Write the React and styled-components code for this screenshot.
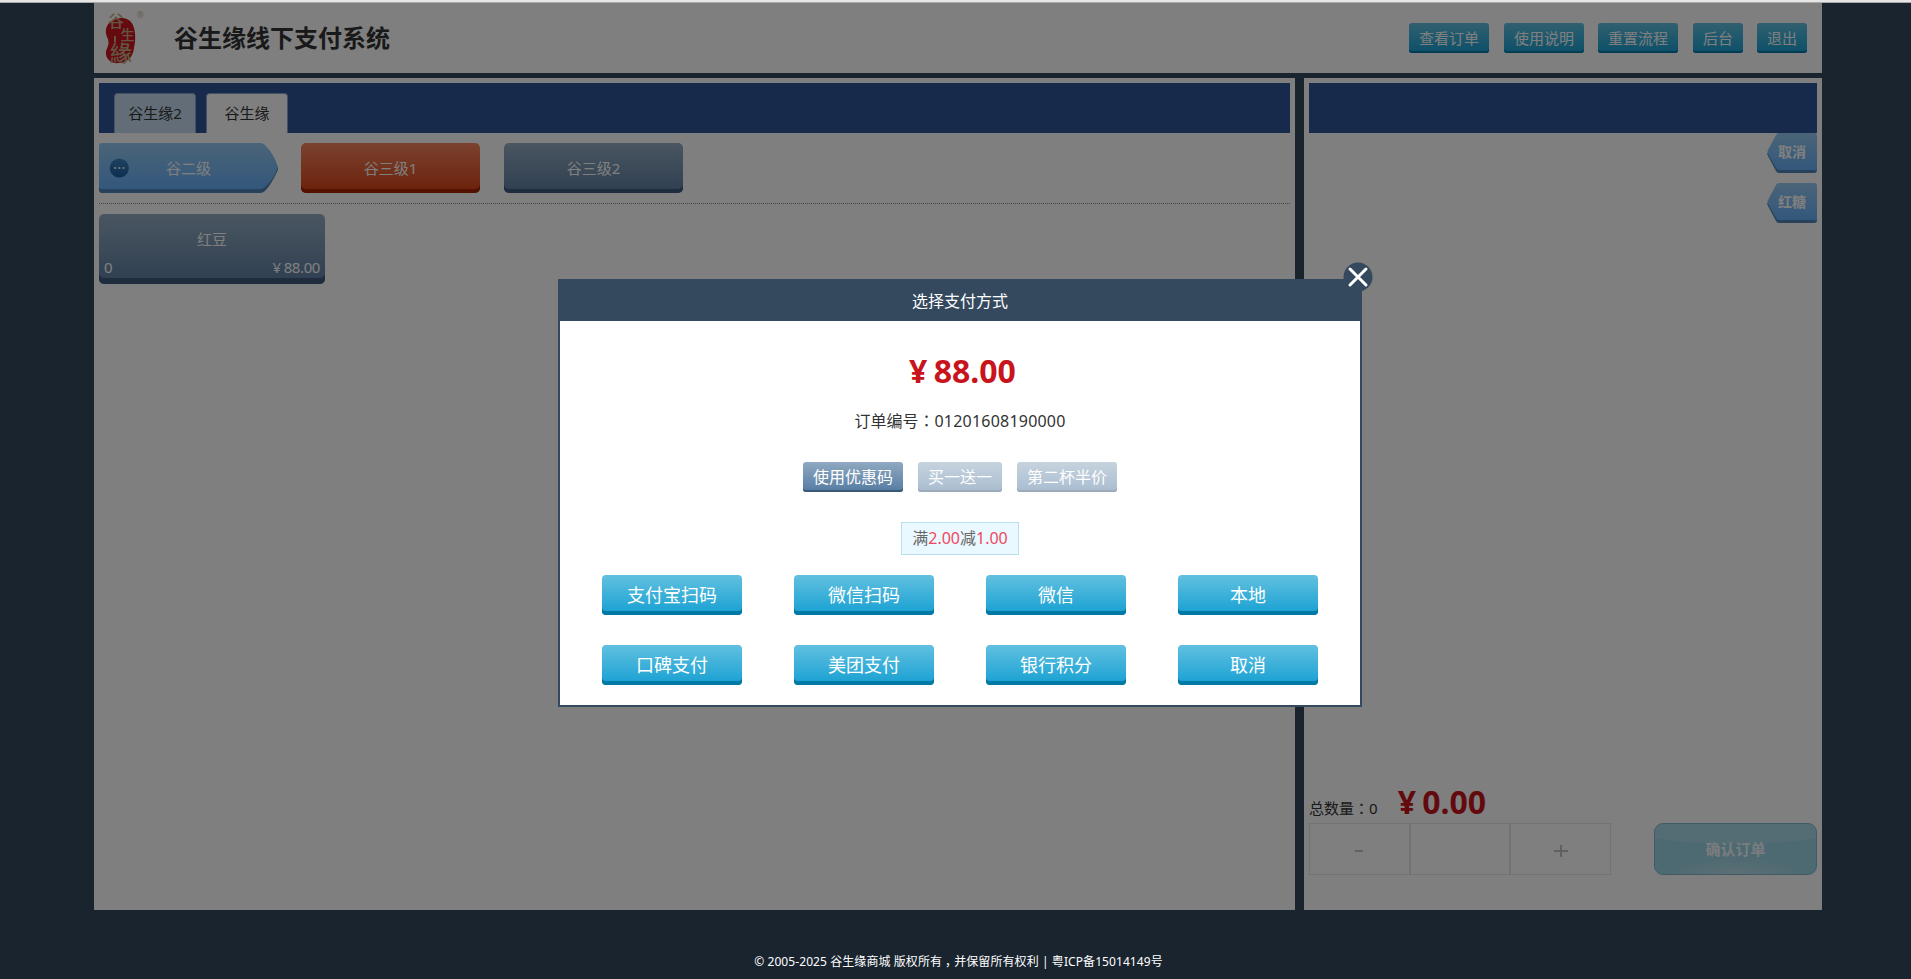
import React from "react";
import styled, { createGlobalStyle, css } from "styled-components";

const GlobalStyle = createGlobalStyle`
  *, *::before, *::after { box-sizing: border-box; }
  html, body { margin: 0; height: 100%; overflow: hidden; background: #34495e; }
  body {
    font-family: "Noto Sans", "Noto Sans CJK SC", sans-serif;
    font-size: 15px;
    color: #333;
  }
  button { font-family: inherit; margin: 0; padding: 0; border: 0; cursor: pointer; }
`;

const Page = styled.div`
  position: relative;
  display: flex;
  flex-direction: column;
  height: 979px;
  background: #34495e;
`;

const TopStrip = styled.div`
  flex: none;
  height: 3px;
  background: #e6e6e6;
  border-bottom: 1px solid #a9a9a9;
`;

const Shell = styled.div`
  flex: none;
  width: 1728px;
  margin-left: 94px;
  display: flex;
  flex-direction: column;
  gap: 5px;
`;

const Header = styled.header`
  height: 70px;
  display: flex;
  align-items: center;
  background: #fff;
  padding: 0 15px 0 8px;
`;

const Logo = styled.svg`
  flex: none;
  width: 52px;
  height: 60px;
  overflow: visible;
`;

const Brand = styled.h1`
  flex: 1;
  margin: 0 0 0 20px;
  font-size: 24px;
  line-height: 34px;
  font-weight: 700;
  color: #333;
`;

const HeaderNav = styled.nav`
  display: flex;
`;

const skins = {
  cyan: css`
    background: linear-gradient(#62c0e0, #16a0d2);
    --edge: #0079a6;
  `,
  steel: css`
    background: linear-gradient(#8fa9c0, #557ba2);
    --edge: #3b5877;
  `,
  slate: css`
    background: linear-gradient(#94acc2, #5d7da2);
    --edge: #3c587a;
  `,
  red: css`
    background: linear-gradient(#f48560, #d84214);
    --edge: #a82200;
  `,
};

const Button = styled.button`
  ${(p) => skins[p.$skin]}
  flex: none;
  display: flex;
  justify-content: center;
  width: ${(p) => p.$w}px;
  height: ${(p) => p.$h}px;
  line-height: ${(p) => p.$h}px;
  border-radius: ${(p) => p.$r || 3}px;
  box-shadow: inset 0 -${(p) => p.$edge || 2}px 0 var(--edge);
  color: #fff;
  font-size: ${(p) => p.$size || 15}px;
  margin-left: ${(p) => p.$gap || 0}px;
  opacity: ${(p) => (p.$faded ? 0.5 : 1)};
  white-space: nowrap;
`;

const Workspace = styled.main`
  display: flex;
  justify-content: space-between;
  height: 832px;
`;

const Panel = styled.section`
  width: ${(p) => p.$w}px;
  padding: 5px;
  background: #fff;
  display: flex;
  flex-direction: column;
`;

const TabBar = styled.div`
  flex: none;
  height: 50px;
  padding: 10px 15px 0;
  display: flex;
  gap: 10px;
  background: #305598;
`;

const Tab = styled.div`
  width: 82px;
  height: 40px;
  line-height: 39px;
  text-align: center;
  border: 1px solid #8ba5c6;
  border-bottom: 0;
  border-radius: 4px 4px 0 0;
  background: ${(p) => (p.$active ? "#fff" : "#c5daf0")};
`;

const CategoryRow = styled.div`
  display: flex;
  gap: 24px;
  padding: 10px 0;
  border-bottom: 1px dotted #888;
`;

const Arrow = styled.div`
  display: grid;
  width: 179px;
  height: 50px;
  margin-right: -1px;
  svg, span { grid-area: 1 / 1; }
  span { color: #fff; text-align: center; line-height: 50px; }
`;

const Product = styled.div`
  ${skins.slate}
  width: 226px;
  height: 70px;
  margin-top: 10px;
  padding: 10px 5px 0;
  border-radius: 5px;
  box-shadow: inset 0 -6px 0 var(--edge);
  color: #fff;
`;

const ProductName = styled.div`
  height: 30px;
  line-height: 30px;
  text-align: center;
`;

const ProductMeta = styled.div`
  display: flex;
  justify-content: space-between;
  line-height: 27px;
  height: 24px;
  letter-spacing: -0.4px;
  word-spacing: -0.6px;
`;

const TagList = styled.div`
  flex: 1;
  display: flex;
  flex-direction: column;
  align-items: flex-end;
  gap: 10px;
`;

const TagBox = styled.div`
  display: grid;
  width: 50px;
  height: 40px;
  svg, span { grid-area: 1 / 1; }
  span {
    padding-left: 11px;
    color: #fff;
    font-size: 14px;
    font-weight: 700;
    line-height: 38px;
  }
`;

const Totals = styled.div`
  display: flex;
  align-items: baseline;
  gap: 20px;
  height: 43px;
  line-height: 44px;
  white-space: nowrap;
`;

/* Full-width colon drawn in the middle of its cell */
const Colon = styled.span`
  font-family: "Noto Sans CJK TC", sans-serif;
  line-height: 1;
`;

const Comma = styled.span`
  padding-left: 3px;
  margin-right: -3px;
`;

const Price = styled.strong`
  font-size: 32px;
  font-weight: 700;
  color: #c7141d;
  word-spacing: -2px;
`;

const OrderRow = styled.div`
  display: flex;
  justify-content: space-between;
  height: 52px;
  margin-bottom: 30px;
`;

const Stepper = styled.div`
  display: flex;
  width: 302px;
`;

const StepCell = styled.div`
  flex: 1;
  border: 1px solid #e6e6e6;
  display: flex;
  align-items: center;
  justify-content: center;
  svg { margin-top: 4px; }
`;

const Confirm = styled.button`
  width: 163px;
  height: 52px;
  padding-bottom: 2px;
  border-radius: 9px;
  border: 1px solid #82b9cf;
  background:
    radial-gradient(ellipse 105px 16px at 50% 4px, rgba(255,255,255,.14) 98%, transparent 100%),
    radial-gradient(ellipse 70px 17px at 50% 100%, #bbdfea, rgba(187,223,234,0)),
    #9ad2e4;
  color: #f5fafc;
  font-size: 15px;
  font-weight: 700;
`;

const Overlay = styled.div`
  position: absolute;
  inset: 3px 0 0 0;
  background: rgba(0, 0, 0, 0.5);
  display: flex;
  justify-content: center;
  align-items: flex-start;
  padding: 276px 0 0 9px;
`;

const Dialog = styled.div`
  position: relative;
  width: 804px;
  height: 428px;
  border: 2px solid #34495e;
  background: #fff;
  display: flex;
  flex-direction: column;
  align-items: center;
`;

const DialogTitle = styled.div`
  width: 100%;
  height: 40px;
  line-height: 40px;
  text-align: center;
  font-size: 16px;
  color: #fff;
  background: #34495e;
`;

const CloseButton = styled.button`
  position: absolute;
  top: -19px;
  right: -13px;
  width: 30px;
  height: 30px;
  background: none;
  svg { display: block; }
`;

const Amount = styled(Price)`
  margin-top: 28px;
  padding-left: 5px;
  line-height: 43px;
`;

const OrderNo = styled.div`
  height: 24px;
  margin-top: 17px;
  font-size: 16px;
  line-height: 24px;
`;

const Digits = styled.span`
  letter-spacing: 0.22px;
`;

const CouponRow = styled.div`
  display: flex;
  gap: 15px;
  margin-top: 29px;
`;

const Promo = styled.div`
  width: 118px;
  height: 33px;
  margin-top: 30px;
  line-height: 31px;
  text-align: center;
  font-size: 16px;
  color: #666;
  border: 1px solid #b8e1ee;
  background: #eaf8ff;
  em { font-style: normal; color: #f04860; }
`;

const PayGrid = styled.div`
  width: 768px;
  display: grid;
  grid-template-columns: repeat(4, 192px);
  justify-items: center;
  row-gap: 30px;
  margin-top: 20px;
`;

const Footer = styled.footer`
  position: relative;
  margin-top: 42px;
  padding-left: 6px;
  text-align: center;
  font-size: 12px;
  line-height: 20px;
  letter-spacing: 0.08px;
  color: #fff;
`;

const SealLogo = () => (
  <Logo viewBox="0 0 52 60">
    <path
      d="M12 12C5 14 2 22 5 29C8 35 6 38 4 43C3 51 9 56 17 55C27 54 31 48 32 40C34 32 34 20 29 14C25 9 17 9 12 12Z"
      fill="#cb141e"
    />
    <path d="M12 28h2v6h-2z" fill="#c6aa84" />
    <text fill="#c6aa84" fontWeight="500" fontFamily='"Noto Sans CJK TC",sans-serif'>
      <tspan x="6" y="19" fontSize="16">谷</tspan>
      <tspan x="18.5" y="32" fontSize="14">生</tspan>
      <tspan x="8" y="53" fontSize="22">緣</tspan>
    </text>
    <text x="34.5" y="9.5" fontSize="9" fill="#cdbba4">®</text>
  </Logo>
);

const CategoryArrow = ({ children }) => (
  <Arrow>
    <svg width="179" height="50" viewBox="0 0 179 50">
      <defs>
        <linearGradient id="sky" x1="0" y1="0" x2="0" y2="1">
          <stop offset="0" stopColor="#96c8f0" />
          <stop offset="1" stopColor="#66b0f8" />
        </linearGradient>
        <linearGradient id="dot" x1="0" y1="0" x2="0" y2="1">
          <stop offset="0" stopColor="#3e86c4" />
          <stop offset="1" stopColor="#1c5c9c" />
        </linearGradient>
      </defs>
      <path d="M0 40H168L179 24V27Q172 42 166 48Q164 50 161 50H3Q0 50 0 47Z" fill="#4e84b4" />
      <path d="M3 0H161Q164 0 166 2Q175 11 179 24Q175 36 166 44Q164 46 161 46H3Q0 46 0 43V3Q0 0 3 0Z" fill="url(#sky)" />
      <circle cx="20.3" cy="25" r="9.6" fill="url(#dot)" />
      <path d="M15.2 24h2v2h-2zM19.3 24h2v2h-2zM23.4 24h2v2h-2z" fill="#cfe2f2" />
    </svg>
    <span>{children}</span>
  </Arrow>
);

const Tag = ({ children }) => (
  <TagBox>
    <svg width="50" height="40" viewBox="0 0 50 40">
      <path d="M0 20H50V37Q50 40 47 40H12Q10 40 9 38L1 23Z" fill="#4e84b4" />
      <path d="M12 0H47Q50 0 50 3V37H12Q10 37 9 35L1 21Q0 19 1 17L9 2Q10 0 12 0Z" fill="url(#sky)" />
    </svg>
    <span>{children}</span>
  </TagBox>
);

const headerActions = [
  ["查看订单", 80, 0],
  ["使用说明", 80, 15],
  ["重置流程", 80, 14],
  ["后台", 50, 15],
  ["退出", 50, 14],
];

const payMethods = ["支付宝扫码", "微信扫码", "微信", "本地", "口碑支付", "美团支付", "银行积分", "取消"];

export default function App() {
  return (
    <Page>
      <GlobalStyle />
      <TopStrip />
      <Shell>
        <Header>
          <SealLogo />
          <Brand>谷生缘线下支付系统</Brand>
          <HeaderNav>
            {headerActions.map(([label, w, gap]) => (
              <Button key={label} $skin="cyan" $w={w} $h={30} $gap={gap}>{label}</Button>
            ))}
          </HeaderNav>
        </Header>
        <Workspace>
          <Panel $w={1201}>
            <TabBar>
              <Tab>谷生缘2</Tab>
              <Tab $active>谷生缘</Tab>
            </TabBar>
            <CategoryRow>
              <CategoryArrow>谷二级</CategoryArrow>
              <Button $skin="red" $w={179} $h={50} $r={5} $edge={4}>谷三级1</Button>
              <Button $skin="slate" $w={179} $h={50} $r={5} $edge={4}>谷三级2</Button>
            </CategoryRow>
            <Product>
              <ProductName>红豆</ProductName>
              <ProductMeta>
                <span>0</span>
                <span>¥ 88.00</span>
              </ProductMeta>
            </Product>
          </Panel>
          <Panel $w={518}>
            <TabBar />
            <TagList>
              <Tag>取消</Tag>
              <Tag>红糖</Tag>
            </TagList>
            <Totals>
              <span>总数量<Colon>：</Colon>0</span>
              <Price>¥ 0.00</Price>
            </Totals>
            <OrderRow>
              <Stepper>
                <StepCell>
                  <svg width="14" height="14"><path d="M3 7h8" stroke="#c0c0c0" strokeWidth="2" /></svg>
                </StepCell>
                <StepCell />
                <StepCell>
                  <svg width="14" height="14"><path d="M0 7h14M7 1v12" stroke="#c0c0c0" strokeWidth="2" /></svg>
                </StepCell>
              </Stepper>
              <Confirm>确认订单</Confirm>
            </OrderRow>
          </Panel>
        </Workspace>
      </Shell>
      <Overlay>
        <Dialog>
          <DialogTitle>选择支付方式</DialogTitle>
          <CloseButton aria-label="关闭">
            <svg width="30" height="30" viewBox="0 0 30 30">
              <circle cx="15" cy="15" r="14.5" fill="#34495e" />
              <path d="M7 7L23 23M23 7L7 23" stroke="#fff" strokeWidth="3" strokeLinecap="round" />
            </svg>
          </CloseButton>
          <Amount>¥ 88.00</Amount>
          <OrderNo>订单编号<Colon>：</Colon><Digits>01201608190000</Digits></OrderNo>
          <CouponRow>
            <Button $skin="steel" $w={100} $h={30} $size={16}>使用优惠码</Button>
            <Button $skin="steel" $w={84} $h={30} $size={16} $faded>买一送一</Button>
            <Button $skin="steel" $w={100} $h={30} $size={16} $faded>第二杯半价</Button>
          </CouponRow>
          <Promo>满<em>2.00</em>减<em>1.00</em></Promo>
          <PayGrid>
            {payMethods.map((m) => (
              <Button key={m} $skin="cyan" $w={140} $h={40} $r={4} $edge={4} $size={18}>{m}</Button>
            ))}
          </PayGrid>
        </Dialog>
      </Overlay>
      <Footer>© 2005-2025 谷生缘商城 版权所有<Comma>，</Comma>并保留所有权利 | 粤ICP备15014149号</Footer>
    </Page>
  );
}
